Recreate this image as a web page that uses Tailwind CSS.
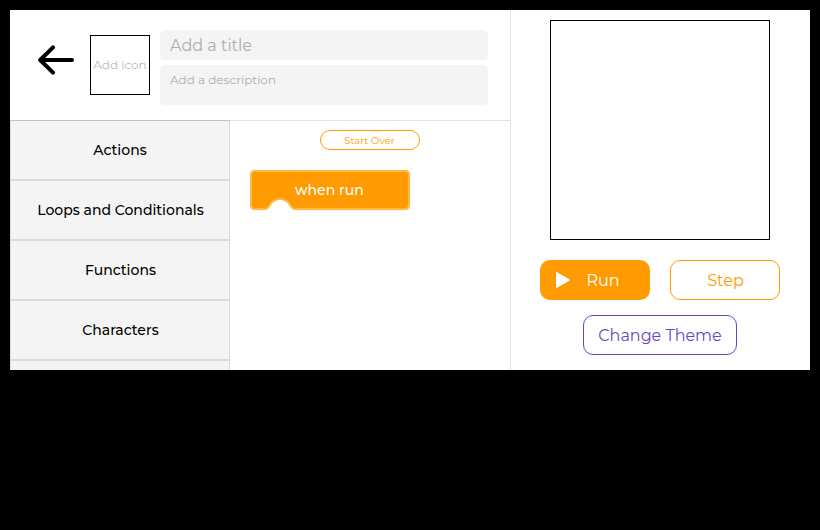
<!DOCTYPE html>
<html lang="en">
<head>
<meta charset="utf-8">
<title>Block editor</title>
<script src="https://cdn.jsdelivr.net/npm/@tailwindcss/browser@4"></script>
</head>
<body class="h-[530px] overflow-hidden bg-black p-[10px] font-['Montserrat','Inter',sans-serif] text-black">
<div class="flex h-[360px] w-[800px] overflow-hidden bg-white">
  <main class="flex w-[500px] flex-col">
    <header class="flex h-[110px] shrink-0 pl-7">
      <svg class="mt-[35px] h-[30px] w-9 shrink-0" viewBox="0 0 36 30" fill="none" stroke="#000" stroke-width="4" stroke-linecap="round" stroke-linejoin="round"><path d="M34 15H2.5M15 2.3 2.2 15 15 27.7"/></svg>
      <div class="mt-[25px] ml-4 flex size-[60px] shrink-0 items-center justify-center border border-black text-xs whitespace-nowrap text-[#b8b8b8]"><span>Add icon</span></div>
      <div class="mt-5 ml-[10px] flex w-[328px] flex-col gap-[5px]">
        <div class="flex h-[30px] items-center rounded-[5px] bg-[#f4f4f4] px-[10px] pt-px text-base text-[#adadad]"><span>Add a title</span></div>
        <div class="h-10 rounded-[5px] bg-[#f4f4f4] px-[10px] pt-[7px] text-xs text-[#adadad]"><span>Add a description</span></div>
      </div>
    </header>
    <div class="flex h-[250px]">
      <nav class="w-[220px] shrink-0 overflow-hidden text-sm font-medium">
        <div class="flex h-[60px] items-center justify-center border border-[#dadada] border-t-[#c2c2c2] bg-[#f4f4f4]"><span>Actions</span></div>
        <div class="flex h-[60px] items-center justify-center border border-[#dadada] bg-[#f4f4f4] pl-px"><span>Loops and Conditionals</span></div>
        <div class="flex h-[60px] items-center justify-center border border-[#dadada] bg-[#f4f4f4] pl-px"><span>Functions</span></div>
        <div class="flex h-[60px] items-center justify-center border border-[#dadada] bg-[#f4f4f4] pl-px"><span>Characters</span></div>
        <div class="h-[60px] border border-[#dadada] bg-[#f4f4f4]"></div>
      </nav>
      <section class="flex w-[280px] flex-col items-start border-t border-[#e2e2e2] pt-[9px]">
        <button class="ml-[90px] flex h-5 w-[100px] items-center justify-center rounded-full border border-[#ff9a00] pr-px text-[10px] text-[#ff9a00]"><span>Start Over</span></button>
        <div class="mt-5 ml-5 grid h-10 w-40">
          <svg class="col-start-1 row-start-1 h-10 w-40" viewBox="0 0 160 40"><path d="M5 1H155Q159 1 159 5V35Q159 39 155 39H45C42 39 41 36 39.500 34C37 30.500 34 29 30 29S23 30.500 20.500 34C19 36 18 39 15 39H5Q1 39 1 35V5Q1 1 5 1Z" fill="#ff9a00" stroke="#ffb83d" stroke-width="2"/></svg>
          <div class="z-10 col-start-1 row-start-1 flex items-center pl-[45px] text-sm font-medium text-white"><span>when run</span></div>
        </div>
      </section>
    </div>
  </main>
  <aside class="flex w-[300px] flex-col items-center border-l border-[#e2e2e2] pt-[10px] pr-px text-base">
    <div class="size-[220px] border border-black"></div>
    <div class="mt-5 flex gap-5">
      <button class="flex h-10 w-[110px] items-center rounded-[10px] bg-[#ff9a00] pl-4 text-white">
        <svg class="h-4 w-[14px]" viewBox="0 0 14 16" fill="#fff"><path d="M0 1.200Q0-.5 1.500.4L13.300 7.200Q14.500 8 13.300 8.800L1.500 15.600Q0 16.500 0 14.800Z"/></svg>
        <span class="ml-[16.5px] pt-px">Run</span>
      </button>
      <button class="flex h-10 w-[110px] items-center justify-center rounded-[10px] border border-[#ff9a00] pl-px text-[#ff9a00]"><span class="pt-px">Step</span></button>
    </div>
    <button class="mt-[15px] flex h-10 w-[154px] items-center justify-center rounded-[10px] border border-[#6846c2] text-[#6846c2]"><span class="pt-px">Change Theme</span></button>
  </aside>
</div>
</body>
</html>
